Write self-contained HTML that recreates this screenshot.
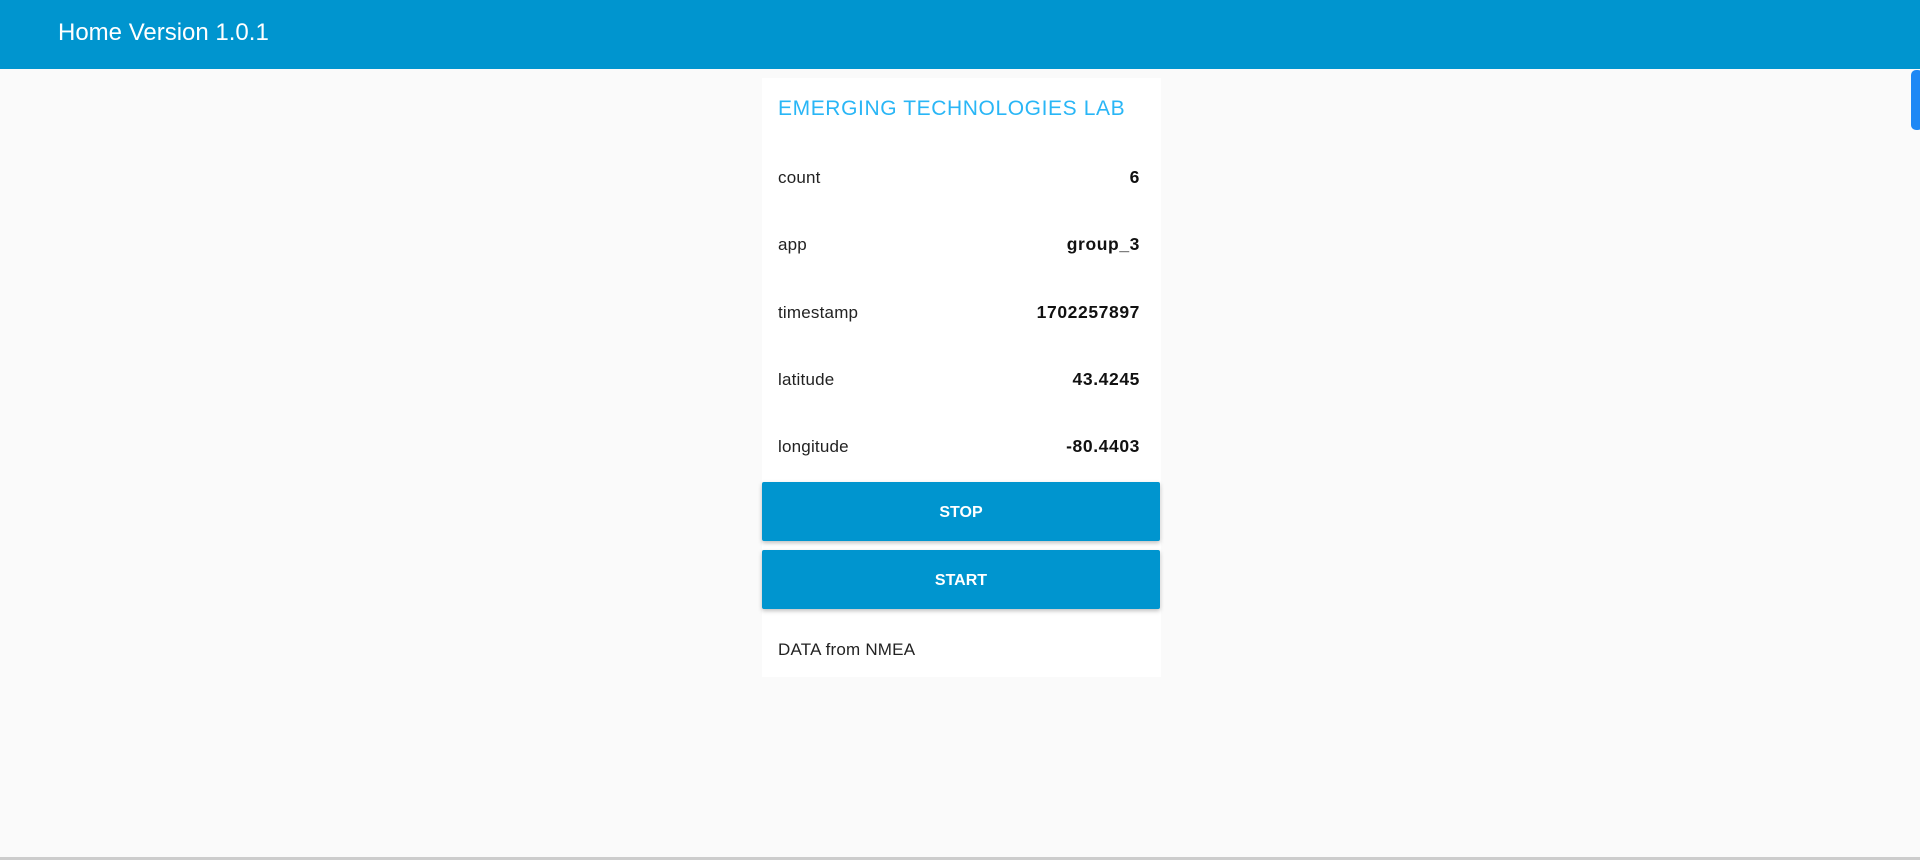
<!DOCTYPE html>
<html><head><meta charset="utf-8"><style>
*{margin:0;padding:0;box-sizing:border-box}
body{width:1920px;height:860px;background:#fafafa;font-family:"Liberation Sans","DejaVu Sans",sans-serif;position:relative;overflow:hidden}
.hdr{position:absolute;left:0;top:0;width:1920px;height:69px;background:#0095cf;color:#fff;font-size:24px;line-height:66px;padding-left:58px}
.card{position:absolute;left:762px;top:78px;width:399px;height:599px;background:#fff}
.t{position:absolute;left:16px;color:#29b6f6;font-size:21px;letter-spacing:0.6px;font-weight:500}
.row{position:absolute;left:16px;width:362px;font-size:17px;color:#222;line-height:20px;letter-spacing:0.2px}
.row b{position:absolute;right:0;top:-1px;color:#111;font-size:17.5px;letter-spacing:0.6px}
.btn{position:absolute;left:762px;width:398px;height:59px;background:#0095cf;color:#fff;font-weight:bold;font-size:16px;text-align:center;line-height:61px;border-radius:2px;box-shadow:0 2px 4px rgba(0,0,0,.25)}
.bl{position:absolute;left:0;top:857px;width:1920px;height:3px;background:#ccc}
.tab{position:absolute;left:1911px;top:70px;width:12px;height:60px;background:#1e88f5;border-radius:5px}
</style></head><body>
<div class="hdr">Home Version 1.0.1</div>
<div class="card">
<div class="t" style="top:19px">EMERGING TECHNOLOGIES LAB</div>
<div class="row" style="top:90px">count<b>6</b></div>
<div class="row" style="top:157px">app<b>group_3</b></div>
<div class="row" style="top:225px">timestamp<b>1702257897</b></div>
<div class="row" style="top:292px">latitude<b>43.4245</b></div>
<div class="row" style="top:359px">longitude<b>-80.4403</b></div>
<div class="row" style="top:562px">DATA from NMEA</div>
</div>
<div class="btn" style="top:482px">STOP</div>
<div class="btn" style="top:550px">START</div>
<div class="tab"></div>
<div class="bl"></div>
</body></html>
